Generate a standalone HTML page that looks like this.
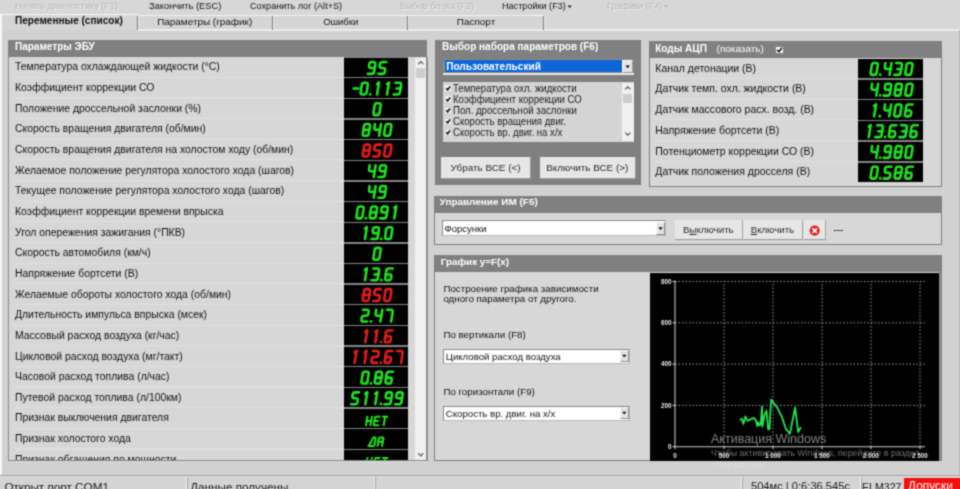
<!DOCTYPE html><html><head><meta charset="utf-8"><title>Diag</title><style>
html,body{margin:0;padding:0}body{width:960px;height:489px;overflow:hidden;position:relative;background:#d1d1d1;font-family:"Liberation Sans", sans-serif;}
div{box-sizing:border-box}
</style></head><body><svg width="0" height="0" style="position:absolute"><defs><filter id="blurf" x="-3%" y="-3%" width="106%" height="106%" color-interpolation-filters="sRGB"><feConvolveMatrix order="3" kernelMatrix="1 3.0 1 3.0 9.0 3.0 1 3.0 1" edgeMode="duplicate" preserveAlpha="true"/></filter></defs></svg><div id="w" style="position:absolute;left:0;top:0;width:960px;height:489px;filter:url(#blurf)">
<div style="position:absolute;left:-12.00px;top:-12.00px;width:984.00px;height:513.00px;background:#d1d1d1;"></div>
<div style="position:absolute;left:-12.00px;top:-12.00px;width:984.00px;height:42.00px;background:#d7d7d7;"></div>
<div style="position:absolute;top:2.10px;font-size:9.1px;line-height:1;white-space:nowrap;color:#aaa;left:15.00px;color:#b6b6b6;text-shadow:0.8px 0.8px 0 #f0f0f0;">Начать диагностику (F1)</div>
<div style="position:absolute;top:1.93px;font-size:9.3px;line-height:1;white-space:nowrap;color:#111111;left:149.00px;">Закончить (ESC)</div>
<div style="position:absolute;top:2.10px;font-size:9.1px;line-height:1;white-space:nowrap;color:#111111;left:250.00px;">Сохранить лог (Alt+S)</div>
<div style="position:absolute;top:2.10px;font-size:9.1px;line-height:1;white-space:nowrap;color:#aaa;left:400.00px;color:#b6b6b6;text-shadow:0.8px 0.8px 0 #f0f0f0;">Выбор блока (F2)</div>
<div style="position:absolute;top:2.10px;font-size:9.1px;line-height:1;white-space:nowrap;color:#111111;left:502.00px;">Настройки (F3)</div>
<div style="position:absolute;top:2.10px;font-size:9.1px;line-height:1;white-space:nowrap;color:#aaa;left:607.00px;color:#b6b6b6;text-shadow:0.8px 0.8px 0 #f0f0f0;">Графики (F4)</div>
<svg style="position:absolute;left:0;top:0" width="960" height="15"><path d="M567.6 5.6h4.2l-2.1 2.5z" fill="#222"/><path d="M664 5.6h4.2l-2.1 2.5z" fill="#b4b4b4"/></svg>
<div style="position:absolute;left:0.00px;top:15.00px;width:544.00px;height:15.00px;background:#d5d5d5;"></div>
<div style="position:absolute;left:-12.00px;top:14.10px;width:150.00px;height:1.30px;background:#f6f6f6;"></div>
<div style="position:absolute;left:138.00px;top:15.00px;width:406.00px;height:1.30px;background:#f2f2f2;"></div>
<div style="position:absolute;left:137.00px;top:29.40px;width:835.00px;height:1.40px;background:#ececec;"></div>
<div style="position:absolute;left:-12.00px;top:14.50px;width:13.50px;height:461.00px;background:#f6f6f6;"></div>
<div style="position:absolute;left:137.00px;top:16.00px;width:1.20px;height:14.00px;background:#7a7a7a;"></div>
<div style="position:absolute;left:138.00px;top:16.00px;width:1.00px;height:14.00px;background:#ececec;"></div>
<div style="position:absolute;left:272.00px;top:16.00px;width:1.20px;height:14.00px;background:#7a7a7a;"></div>
<div style="position:absolute;left:273.00px;top:16.00px;width:1.00px;height:14.00px;background:#ececec;"></div>
<div style="position:absolute;left:407.00px;top:16.00px;width:1.20px;height:14.00px;background:#7a7a7a;"></div>
<div style="position:absolute;left:408.00px;top:16.00px;width:1.00px;height:14.00px;background:#ececec;"></div>
<div style="position:absolute;left:543.00px;top:16.00px;width:1.20px;height:14.00px;background:#7a7a7a;"></div>
<div style="position:absolute;left:544.00px;top:16.00px;width:1.00px;height:14.00px;background:#ececec;"></div>
<div style="position:absolute;top:16.09px;font-size:10.05px;line-height:1;white-space:nowrap;color:#101010;font-weight:bold;left:15.00px;">Переменные (список)</div>
<div style="position:absolute;top:16.58px;font-size:9.95px;line-height:1;white-space:nowrap;color:#111111;left:4.70px;width:400px;text-align:center;">Параметры (график)</div>
<div style="position:absolute;top:17.00px;font-size:9.45px;line-height:1;white-space:nowrap;color:#111111;left:140.70px;width:400px;text-align:center;">Ошибки</div>
<div style="position:absolute;top:16.58px;font-size:9.95px;line-height:1;white-space:nowrap;color:#111111;left:276.00px;width:400px;text-align:center;">Паспорт</div>
<div style="position:absolute;left:959.00px;top:30.00px;width:13.00px;height:445.00px;background:#bcbcbc;"></div>
<div style="position:absolute;left:8.00px;top:40.00px;width:419.00px;height:17.20px;background:#808080;"></div>
<div style="position:absolute;top:42.03px;font-size:10.0px;line-height:1;white-space:nowrap;color:#fff;font-weight:bold;left:15.00px;">Параметры ЭБУ</div>
<div style="position:absolute;left:8.00px;top:57.00px;width:419.60px;height:403.90px;background:#d7d7d7;border-left:1px solid #8a8a8a;border-bottom:1px solid #848484;"></div>
<div style="position:absolute;left:8.00px;top:460.90px;width:419.00px;height:1.00px;background:#dadada;"></div>
<div style="position:absolute;left:426.00px;top:57.00px;width:1.60px;height:403.90px;background:#8e8e8e;"></div>
<div style="position:absolute;left:9px;top:57px;width:417px;height:402.9px;overflow:hidden">
<div style="position:absolute;left:335.00px;top:0.00px;width:64.00px;height:404.00px;background:#868686"></div>
<div style="position:absolute;left:6.00px;top:19.79px;width:329.00px;height:1.10px;background:#dfdfdf"></div>
<div style="position:absolute;left:6.00px;top:5.48px;font-size:10.42px;line-height:1;white-space:nowrap;color:#111111">Температура охлаждающей жидкости (°C)</div>
<div style="position:absolute;left:335.00px;top:0.75px;width:64.00px;height:19.29px;background:#000"></div>
<div style="position:absolute;left:6.00px;top:40.44px;width:329.00px;height:1.10px;background:#dfdfdf"></div>
<div style="position:absolute;left:6.00px;top:26.12px;font-size:10.42px;line-height:1;white-space:nowrap;color:#111111">Коэффициент коррекции СО</div>
<div style="position:absolute;left:335.00px;top:21.39px;width:64.00px;height:19.29px;background:#000"></div>
<div style="position:absolute;left:6.00px;top:61.08px;width:329.00px;height:1.10px;background:#dfdfdf"></div>
<div style="position:absolute;left:6.00px;top:46.77px;font-size:10.42px;line-height:1;white-space:nowrap;color:#111111">Положение дроссельной заслонки (%)</div>
<div style="position:absolute;left:335.00px;top:42.04px;width:64.00px;height:19.29px;background:#000"></div>
<div style="position:absolute;left:6.00px;top:81.73px;width:329.00px;height:1.10px;background:#dfdfdf"></div>
<div style="position:absolute;left:6.00px;top:67.41px;font-size:10.42px;line-height:1;white-space:nowrap;color:#111111">Скорость вращения двигателя (об/мин)</div>
<div style="position:absolute;left:335.00px;top:62.69px;width:64.00px;height:19.29px;background:#000"></div>
<div style="position:absolute;left:6.00px;top:102.38px;width:329.00px;height:1.10px;background:#dfdfdf"></div>
<div style="position:absolute;left:6.00px;top:88.06px;font-size:10.42px;line-height:1;white-space:nowrap;color:#111111">Скорость вращения двигателя на холостом ходу (об/мин)</div>
<div style="position:absolute;left:335.00px;top:83.33px;width:64.00px;height:19.29px;background:#000"></div>
<div style="position:absolute;left:6.00px;top:123.02px;width:329.00px;height:1.10px;background:#dfdfdf"></div>
<div style="position:absolute;left:6.00px;top:108.70px;font-size:10.42px;line-height:1;white-space:nowrap;color:#111111">Желаемое положение регулятора холостого хода (шагов)</div>
<div style="position:absolute;left:335.00px;top:103.97px;width:64.00px;height:19.29px;background:#000"></div>
<div style="position:absolute;left:6.00px;top:143.67px;width:329.00px;height:1.10px;background:#dfdfdf"></div>
<div style="position:absolute;left:6.00px;top:129.35px;font-size:10.42px;line-height:1;white-space:nowrap;color:#111111">Текущее положение регулятора холостого хода (шагов)</div>
<div style="position:absolute;left:335.00px;top:124.62px;width:64.00px;height:19.29px;background:#000"></div>
<div style="position:absolute;left:6.00px;top:164.31px;width:329.00px;height:1.10px;background:#dfdfdf"></div>
<div style="position:absolute;left:6.00px;top:149.99px;font-size:10.42px;line-height:1;white-space:nowrap;color:#111111">Коэффициент коррекции времени впрыска</div>
<div style="position:absolute;left:335.00px;top:145.26px;width:64.00px;height:19.29px;background:#000"></div>
<div style="position:absolute;left:6.00px;top:184.95px;width:329.00px;height:1.10px;background:#dfdfdf"></div>
<div style="position:absolute;left:6.00px;top:170.64px;font-size:10.42px;line-height:1;white-space:nowrap;color:#111111">Угол опережения зажигания (°ПКВ)</div>
<div style="position:absolute;left:335.00px;top:165.91px;width:64.00px;height:19.29px;background:#000"></div>
<div style="position:absolute;left:6.00px;top:205.60px;width:329.00px;height:1.10px;background:#dfdfdf"></div>
<div style="position:absolute;left:6.00px;top:191.28px;font-size:10.42px;line-height:1;white-space:nowrap;color:#111111">Скорость автомобиля (км/ч)</div>
<div style="position:absolute;left:335.00px;top:186.56px;width:64.00px;height:19.29px;background:#000"></div>
<div style="position:absolute;left:6.00px;top:226.25px;width:329.00px;height:1.10px;background:#dfdfdf"></div>
<div style="position:absolute;left:6.00px;top:211.93px;font-size:10.42px;line-height:1;white-space:nowrap;color:#111111">Напряжение бортсети (В)</div>
<div style="position:absolute;left:335.00px;top:207.20px;width:64.00px;height:19.29px;background:#000"></div>
<div style="position:absolute;left:6.00px;top:246.89px;width:329.00px;height:1.10px;background:#dfdfdf"></div>
<div style="position:absolute;left:6.00px;top:232.57px;font-size:10.42px;line-height:1;white-space:nowrap;color:#111111">Желаемые обороты холостого хода (об/мин)</div>
<div style="position:absolute;left:335.00px;top:227.84px;width:64.00px;height:19.29px;background:#000"></div>
<div style="position:absolute;left:6.00px;top:267.54px;width:329.00px;height:1.10px;background:#dfdfdf"></div>
<div style="position:absolute;left:6.00px;top:253.22px;font-size:10.42px;line-height:1;white-space:nowrap;color:#111111">Длительность импульса впрыска (мсек)</div>
<div style="position:absolute;left:335.00px;top:248.49px;width:64.00px;height:19.29px;background:#000"></div>
<div style="position:absolute;left:6.00px;top:288.18px;width:329.00px;height:1.10px;background:#dfdfdf"></div>
<div style="position:absolute;left:6.00px;top:273.86px;font-size:10.42px;line-height:1;white-space:nowrap;color:#111111">Массовый расход воздуха (кг/час)</div>
<div style="position:absolute;left:335.00px;top:269.13px;width:64.00px;height:19.29px;background:#000"></div>
<div style="position:absolute;left:6.00px;top:308.82px;width:329.00px;height:1.10px;background:#dfdfdf"></div>
<div style="position:absolute;left:6.00px;top:294.51px;font-size:10.42px;line-height:1;white-space:nowrap;color:#111111">Цикловой расход воздуха (мг/такт)</div>
<div style="position:absolute;left:335.00px;top:289.78px;width:64.00px;height:19.29px;background:#000"></div>
<div style="position:absolute;left:6.00px;top:329.47px;width:329.00px;height:1.10px;background:#dfdfdf"></div>
<div style="position:absolute;left:6.00px;top:315.15px;font-size:10.42px;line-height:1;white-space:nowrap;color:#111111">Часовой расход топлива (л/час)</div>
<div style="position:absolute;left:335.00px;top:310.43px;width:64.00px;height:19.29px;background:#000"></div>
<div style="position:absolute;left:6.00px;top:350.12px;width:329.00px;height:1.10px;background:#dfdfdf"></div>
<div style="position:absolute;left:6.00px;top:335.80px;font-size:10.42px;line-height:1;white-space:nowrap;color:#111111">Путевой расход топлива (л/100км)</div>
<div style="position:absolute;left:335.00px;top:331.07px;width:64.00px;height:19.29px;background:#000"></div>
<div style="position:absolute;left:6.00px;top:370.76px;width:329.00px;height:1.10px;background:#dfdfdf"></div>
<div style="position:absolute;left:6.00px;top:356.44px;font-size:10.42px;line-height:1;white-space:nowrap;color:#111111">Признак выключения двигателя</div>
<div style="position:absolute;left:335.00px;top:351.71px;width:64.00px;height:19.29px;background:#000"></div>
<div style="position:absolute;left:6.00px;top:391.41px;width:329.00px;height:1.10px;background:#dfdfdf"></div>
<div style="position:absolute;left:6.00px;top:377.09px;font-size:10.42px;line-height:1;white-space:nowrap;color:#111111">Признак холостого хода</div>
<div style="position:absolute;left:335.00px;top:372.36px;width:64.00px;height:19.29px;background:#000"></div>
<div style="position:absolute;left:6.00px;top:412.05px;width:329.00px;height:1.10px;background:#dfdfdf"></div>
<div style="position:absolute;left:6.00px;top:397.73px;font-size:10.42px;line-height:1;white-space:nowrap;color:#111111">Признак обгащения по мощности</div>
<div style="position:absolute;left:335.00px;top:393.00px;width:64.00px;height:19.29px;background:#000"></div>
</div>
<div style="position:absolute;left:415.00px;top:57.50px;width:11.00px;height:402.40px;background:#f0f0f0;"></div>
<div style="position:absolute;left:416.00px;top:68.00px;width:9.00px;height:10.00px;background:#cdcdcd;"></div>
<svg style="position:absolute;left:415px;top:57px" width="12" height="404"><path d="M3.2 7.2L5.8 4.6L8.4 7.2" stroke="#505050" stroke-width="1.2" fill="none"/><path d="M3.2 396.2L5.8 398.8L8.4 396.2" stroke="#505050" stroke-width="1.2" fill="none"/></svg>
<div style="position:absolute;left:435.00px;top:39.80px;width:206.00px;height:145.60px;background:#808080;"></div>
<div style="position:absolute;top:42.00px;font-size:10.04px;line-height:1;white-space:nowrap;color:#fff;font-weight:bold;left:442.00px;">Выбор набора параметров (F6)</div>
<div style="position:absolute;left:443.30px;top:58.70px;width:191.00px;height:14.50px;background:#8c8a88;"></div>
<div style="position:absolute;left:443.00px;top:73.20px;width:191.30px;height:1.50px;background:#ece8e6;"></div>
<div style="position:absolute;left:445.00px;top:60.00px;width:177.30px;height:12.40px;background:#0c66d8;"></div>
<div style="position:absolute;top:61.65px;font-size:10.1px;line-height:1;white-space:nowrap;color:#fff;font-weight:bold;left:446.20px;">Пользовательский</div>
<div style="position:absolute;left:622.30px;top:60.30px;width:10.80px;height:12.60px;background:#e6e6e6;border:1px solid #9a9a9a;border-top-color:#f8f8f8;border-left-color:#f8f8f8;"></div>
<svg style="position:absolute;left:622px;top:60px" width="12" height="13"><path d="M3.4 5.4h4.6l-2.3 2.8z" fill="#111"/></svg>
<div style="position:absolute;left:442.80px;top:82.00px;width:191.40px;height:59.60px;background:#d4d4d4;"></div>
<div style="position:absolute;left:622.00px;top:82.50px;width:11.60px;height:58.60px;background:#f0f0f0;"></div>
<div style="position:absolute;left:623.00px;top:94.00px;width:9.40px;height:9.40px;background:#cdcdcd;"></div>
<svg style="position:absolute;left:622px;top:82px" width="12" height="60"><path d="M3.2 7.4L5.8 4.8L8.4 7.4" stroke="#505050" stroke-width="1.2" fill="none"/><path d="M3.2 50.6L5.8 53.2L8.4 50.6" stroke="#505050" stroke-width="1.2" fill="none"/></svg>
<div style="position:absolute;top:82.84px;font-size:10.7px;line-height:1;white-space:nowrap;color:#1c1c1c;left:453.20px;transform:scaleX(0.9);transform-origin:0 50%;">Температура охл. жидкости</div>
<div style="position:absolute;left:445.10px;top:85.30px;width:5.60px;height:5.60px;background:#f4f4f4;"></div>
<svg style="position:absolute;left:445px;top:84.70px" width="7" height="7"><path d="M1.2 3.3L2.6 4.8L5.2 1.5" stroke="#080808" stroke-width="1.45" fill="none"/></svg>
<div style="position:absolute;top:93.94px;font-size:10.7px;line-height:1;white-space:nowrap;color:#1c1c1c;left:453.20px;transform:scaleX(0.9);transform-origin:0 50%;">Коэффициент коррекции СО</div>
<div style="position:absolute;left:445.10px;top:96.40px;width:5.60px;height:5.60px;background:#f4f4f4;"></div>
<svg style="position:absolute;left:445px;top:95.80px" width="7" height="7"><path d="M1.2 3.3L2.6 4.8L5.2 1.5" stroke="#080808" stroke-width="1.45" fill="none"/></svg>
<div style="position:absolute;top:105.04px;font-size:10.7px;line-height:1;white-space:nowrap;color:#1c1c1c;left:453.20px;transform:scaleX(0.9);transform-origin:0 50%;">Пол. дроссельной заслонки</div>
<div style="position:absolute;left:445.10px;top:107.50px;width:5.60px;height:5.60px;background:#f4f4f4;"></div>
<svg style="position:absolute;left:445px;top:106.90px" width="7" height="7"><path d="M1.2 3.3L2.6 4.8L5.2 1.5" stroke="#080808" stroke-width="1.45" fill="none"/></svg>
<div style="position:absolute;top:116.14px;font-size:10.7px;line-height:1;white-space:nowrap;color:#1c1c1c;left:453.20px;transform:scaleX(0.9);transform-origin:0 50%;">Скорость вращения двиг.</div>
<div style="position:absolute;left:445.10px;top:118.60px;width:5.60px;height:5.60px;background:#f4f4f4;"></div>
<svg style="position:absolute;left:445px;top:118.00px" width="7" height="7"><path d="M1.2 3.3L2.6 4.8L5.2 1.5" stroke="#080808" stroke-width="1.45" fill="none"/></svg>
<div style="position:absolute;top:127.24px;font-size:10.7px;line-height:1;white-space:nowrap;color:#1c1c1c;left:453.20px;transform:scaleX(0.9);transform-origin:0 50%;">Скорость вр. двиг. на х/х</div>
<div style="position:absolute;left:445.10px;top:129.70px;width:5.60px;height:5.60px;background:#f4f4f4;"></div>
<svg style="position:absolute;left:445px;top:129.10px" width="7" height="7"><path d="M1.2 3.3L2.6 4.8L5.2 1.5" stroke="#080808" stroke-width="1.45" fill="none"/></svg>
<div style="position:absolute;left:441.00px;top:156.60px;width:89.00px;height:21.00px;background:#e6e6e6;box-shadow:0.6px 0.8px 0 0.3px #9c9c9c;"></div>
<div style="position:absolute;top:162.62px;font-size:9.9px;line-height:1;white-space:nowrap;color:#2a2a2a;left:285.50px;width:400px;text-align:center;">Убрать ВСЕ (&lt;)</div>
<div style="position:absolute;left:540.00px;top:156.60px;width:94.50px;height:21.00px;background:#e6e6e6;box-shadow:0.6px 0.8px 0 0.3px #9c9c9c;"></div>
<div style="position:absolute;top:162.62px;font-size:9.9px;line-height:1;white-space:nowrap;color:#2a2a2a;left:387.25px;width:400px;text-align:center;">Включить ВСЕ (&gt;)</div>
<div style="position:absolute;left:649.00px;top:40.80px;width:292.60px;height:17.00px;background:#808080;"></div>
<div style="position:absolute;top:44.09px;font-size:10.05px;line-height:1;white-space:nowrap;color:#fff;font-weight:bold;left:655.20px;">Коды АЦП</div>
<div style="position:absolute;top:44.45px;font-size:9.98px;line-height:1;white-space:nowrap;color:#fff;left:716.60px;">(показать)</div>
<div style="position:absolute;left:775.60px;top:46.60px;width:7.80px;height:6.90px;background:#fafafa;"></div>
<svg style="position:absolute;left:775px;top:46px" width="9" height="8"><path d="M2 3.8L3.9 5.8L7 1.8" stroke="#000" stroke-width="1.4" fill="none"/></svg>
<div style="position:absolute;left:649.00px;top:57.80px;width:292.60px;height:129.00px;background:#d7d7d7;border:1px solid #7e7e7e;border-top:none;"></div>
<div style="position:absolute;left:858.30px;top:58.60px;width:64.40px;height:123.00px;background:#868686;"></div>
<div style="position:absolute;left:655.30px;top:77.85px;width:203.00px;height:1.10px;background:#dfdfdf;"></div>
<div style="position:absolute;top:63.53px;font-size:10.48px;line-height:1;white-space:nowrap;color:#111111;left:655.30px;">Канал детонации (В)</div>
<div style="position:absolute;left:858.30px;top:58.75px;width:64.40px;height:19.35px;background:#000;"></div>
<div style="position:absolute;left:655.30px;top:98.60px;width:203.00px;height:1.10px;background:#dfdfdf;"></div>
<div style="position:absolute;top:84.28px;font-size:10.48px;line-height:1;white-space:nowrap;color:#111111;left:655.30px;">Датчик темп. охл. жидкости (В)</div>
<div style="position:absolute;left:858.30px;top:79.50px;width:64.40px;height:19.35px;background:#000;"></div>
<div style="position:absolute;left:655.30px;top:119.35px;width:203.00px;height:1.10px;background:#dfdfdf;"></div>
<div style="position:absolute;top:105.03px;font-size:10.48px;line-height:1;white-space:nowrap;color:#111111;left:655.30px;">Датчик массового расх. возд. (В)</div>
<div style="position:absolute;left:858.30px;top:100.25px;width:64.40px;height:19.35px;background:#000;"></div>
<div style="position:absolute;left:655.30px;top:140.10px;width:203.00px;height:1.10px;background:#dfdfdf;"></div>
<div style="position:absolute;top:125.78px;font-size:10.48px;line-height:1;white-space:nowrap;color:#111111;left:655.30px;">Напряжение бортсети (В)</div>
<div style="position:absolute;left:858.30px;top:121.00px;width:64.40px;height:19.35px;background:#000;"></div>
<div style="position:absolute;left:655.30px;top:160.85px;width:203.00px;height:1.10px;background:#dfdfdf;"></div>
<div style="position:absolute;top:146.53px;font-size:10.48px;line-height:1;white-space:nowrap;color:#111111;left:655.30px;">Потенциометр коррекции СО (В)</div>
<div style="position:absolute;left:858.30px;top:141.75px;width:64.40px;height:19.35px;background:#000;"></div>
<div style="position:absolute;top:167.28px;font-size:10.48px;line-height:1;white-space:nowrap;color:#111111;left:655.30px;">Датчик положения дросселя (В)</div>
<div style="position:absolute;left:858.30px;top:162.50px;width:64.40px;height:19.35px;background:#000;"></div>
<div style="position:absolute;left:434.00px;top:196.00px;width:507.60px;height:17.00px;background:#808080;"></div>
<div style="position:absolute;top:196.56px;font-size:9.97px;line-height:1;white-space:nowrap;color:#fff;font-weight:bold;left:439.60px;">Управление ИМ (F5)</div>
<div style="position:absolute;left:434.00px;top:213.00px;width:507.60px;height:31.80px;background:#d7d7d7;border:1px solid #7e7e7e;border-top:none;"></div>
<div style="position:absolute;left:441.80px;top:220.30px;width:224.50px;height:16.00px;background:#fff;border:1px solid #b8b8b8;border-top-color:#8a8a8a;border-left-color:#8a8a8a;"></div>
<div style="position:absolute;top:223.72px;font-size:9.55px;line-height:1;white-space:nowrap;color:#111;left:444.40px;">Форсунки</div>
<div style="position:absolute;left:656.30px;top:222.00px;width:9.00px;height:12.60px;background:#e4e4e4;border:1px solid #8c8c8c;border-top-color:#f6f6f6;border-left-color:#f6f6f6;"></div>
<svg style="position:absolute;left:656px;top:222px" width="10" height="13"><path d="M2.3 5.2h4.6l-2.3 2.8z" fill="#111"/></svg>
<div style="position:absolute;left:675.00px;top:219.50px;width:66.60px;height:19.40px;background:#e6e6e6;box-shadow:0.6px 0.8px 0 0.3px #9c9c9c;"></div>
<div style="position:absolute;top:224.85px;font-size:9.75px;line-height:1;white-space:nowrap;color:#2a2a2a;left:508.30px;width:400px;text-align:center;">В<u>ы</u>ключить</div>
<div style="position:absolute;left:742.60px;top:219.50px;width:59.60px;height:19.40px;background:#e6e6e6;box-shadow:0.6px 0.8px 0 0.3px #9c9c9c;"></div>
<div style="position:absolute;top:224.89px;font-size:9.7px;line-height:1;white-space:nowrap;color:#2a2a2a;left:572.40px;width:400px;text-align:center;"><u>В</u>ключить</div>
<div style="position:absolute;left:803.60px;top:219.50px;width:21.40px;height:19.40px;background:#e6e6e6;box-shadow:0.6px 0.8px 0 0.3px #9c9c9c;"></div>
<div style="position:absolute;top:224.72px;font-size:9.9px;line-height:1;white-space:nowrap;color:#2a2a2a;left:614.30px;width:400px;text-align:center;"></div>
<svg style="position:absolute;left:808px;top:223.8px" width="14" height="14"><circle cx="6.7" cy="6.6" r="5.1" fill="#e01b24"/><path d="M4.5 4.4L8.9 8.8M8.9 4.4L4.5 8.8" stroke="#fff" stroke-width="1.7"/></svg>
<div style="position:absolute;top:225.03px;font-size:10px;line-height:1;white-space:nowrap;color:#111;left:833.40px;">---</div>
<div style="position:absolute;left:434.00px;top:254.60px;width:507.60px;height:17.60px;background:#808080;"></div>
<div style="position:absolute;top:257.36px;font-size:9.85px;line-height:1;white-space:nowrap;color:#fff;font-weight:bold;left:440.80px;">График y=F(x)</div>
<div style="position:absolute;left:434.00px;top:272.00px;width:507.60px;height:188.80px;background:#d7d7d7;border:1px solid #7e7e7e;border-top:none;"></div>
<div style="position:absolute;top:283.55px;font-size:9.75px;line-height:1;white-space:nowrap;color:#111111;left:443.40px;">Построение графика зависимости</div>
<div style="position:absolute;top:294.05px;font-size:9.75px;line-height:1;white-space:nowrap;color:#111111;left:443.40px;">одного параметра от другого.</div>
<div style="position:absolute;top:330.05px;font-size:9.75px;line-height:1;white-space:nowrap;color:#111111;left:443.40px;">По вертикали (F8)</div>
<div style="position:absolute;top:387.35px;font-size:9.75px;line-height:1;white-space:nowrap;color:#111111;left:443.40px;">По горизонтали (F9)</div>
<div style="position:absolute;left:442.60px;top:348.80px;width:187.00px;height:15.20px;background:#fff;border:1px solid #b8b8b8;border-top-color:#8a8a8a;border-left-color:#8a8a8a;"></div>
<div style="position:absolute;top:351.54px;font-size:9.64px;line-height:1;white-space:nowrap;color:#111;left:445.80px;">Цикловой расход воздуха</div>
<div style="position:absolute;left:620.00px;top:350.40px;width:8.60px;height:12.00px;background:#e4e4e4;border:1px solid #8c8c8c;border-top-color:#f6f6f6;border-left-color:#f6f6f6;"></div>
<svg style="position:absolute;left:620.0px;top:350.4px" width="9" height="12"><path d="M2.1 4.8h4.4l-2.2 2.7z" fill="#111"/></svg>
<div style="position:absolute;left:442.60px;top:405.80px;width:187.00px;height:15.20px;background:#fff;border:1px solid #b8b8b8;border-top-color:#8a8a8a;border-left-color:#8a8a8a;"></div>
<div style="position:absolute;top:408.54px;font-size:9.64px;line-height:1;white-space:nowrap;color:#111;left:445.80px;">Скорость вр. двиг. на х/х</div>
<div style="position:absolute;left:620.00px;top:407.40px;width:8.60px;height:12.00px;background:#e4e4e4;border:1px solid #8c8c8c;border-top-color:#f6f6f6;border-left-color:#f6f6f6;"></div>
<svg style="position:absolute;left:620.0px;top:407.4px" width="9" height="12"><path d="M2.1 4.8h4.4l-2.2 2.7z" fill="#111"/></svg>
<div style="position:absolute;left:650.00px;top:272.80px;width:289.00px;height:188.00px;background:#000;"></div>
<div style="position:absolute;left:939.00px;top:272.20px;width:2.60px;height:188.60px;background:#8a8a8a;"></div>
<svg style="position:absolute;left:0;top:0" width="960" height="489"><g stroke="#a2a2a2" stroke-width="0.9" stroke-dasharray="1.6 1.9" fill="none"><path d="M675.0 405.40H924.90"/><path d="M675.0 364.10H924.90"/><path d="M675.0 322.80H924.90"/><path d="M675.0 281.50H924.90"/><path d="M724.00 446.7V281.50"/><path d="M773.00 446.7V281.50"/><path d="M822.00 446.7V281.50"/><path d="M871.00 446.7V281.50"/><path d="M920.00 446.7V281.50"/></g><path d="M675.0 280.50V446.7H924.90" stroke="#cdcdcd" stroke-width="1.1" fill="none"/><path d="M672.5 446.70H675.0" stroke="#d8d8d8" stroke-width="1"/><text x="671.5" y="448.90" font-size="6.3" font-weight="bold" fill="#e8e8e8" text-anchor="end" font-family='"Liberation Sans", sans-serif'>0</text><path d="M672.5 405.40H675.0" stroke="#d8d8d8" stroke-width="1"/><text x="671.5" y="407.60" font-size="6.3" font-weight="bold" fill="#e8e8e8" text-anchor="end" font-family='"Liberation Sans", sans-serif'>200</text><path d="M672.5 364.10H675.0" stroke="#d8d8d8" stroke-width="1"/><text x="671.5" y="366.30" font-size="6.3" font-weight="bold" fill="#e8e8e8" text-anchor="end" font-family='"Liberation Sans", sans-serif'>400</text><path d="M672.5 322.80H675.0" stroke="#d8d8d8" stroke-width="1"/><text x="671.5" y="325.00" font-size="6.3" font-weight="bold" fill="#e8e8e8" text-anchor="end" font-family='"Liberation Sans", sans-serif'>600</text><path d="M672.5 281.50H675.0" stroke="#d8d8d8" stroke-width="1"/><text x="671.5" y="283.70" font-size="6.3" font-weight="bold" fill="#e8e8e8" text-anchor="end" font-family='"Liberation Sans", sans-serif'>800</text><path d="M675.00 446.7v2.5" stroke="#d8d8d8" stroke-width="1"/><text x="675.00" y="457.70" font-size="6.3" font-weight="bold" fill="#e8e8e8" text-anchor="middle" font-family='"Liberation Sans", sans-serif'>0</text><path d="M724.00 446.7v2.5" stroke="#d8d8d8" stroke-width="1"/><text x="724.00" y="457.70" font-size="6.3" font-weight="bold" fill="#e8e8e8" text-anchor="middle" font-family='"Liberation Sans", sans-serif'>500</text><path d="M773.00 446.7v2.5" stroke="#d8d8d8" stroke-width="1"/><text x="773.00" y="457.70" font-size="6.3" font-weight="bold" fill="#e8e8e8" text-anchor="middle" font-family='"Liberation Sans", sans-serif'>1 000</text><path d="M822.00 446.7v2.5" stroke="#d8d8d8" stroke-width="1"/><text x="822.00" y="457.70" font-size="6.3" font-weight="bold" fill="#e8e8e8" text-anchor="middle" font-family='"Liberation Sans", sans-serif'>1 500</text><path d="M871.00 446.7v2.5" stroke="#d8d8d8" stroke-width="1"/><text x="871.00" y="457.70" font-size="6.3" font-weight="bold" fill="#e8e8e8" text-anchor="middle" font-family='"Liberation Sans", sans-serif'>2 000</text><path d="M920.00 446.7v2.5" stroke="#d8d8d8" stroke-width="1"/><text x="920.00" y="457.70" font-size="6.3" font-weight="bold" fill="#e8e8e8" text-anchor="middle" font-family='"Liberation Sans", sans-serif'>2 500</text><path d="M739.9 419.9L742.0 418.9L743.4 424.0L745.4 416.4L747.5 420.9L753.6 417.9L755.7 419.9L757.3 426.0L758.3 422.0L759.3 425.4L760.8 424.0L762.0 406.6L762.4 426.6L764.5 414.8L766.5 410.7L768.1 429.1L769.6 429.1L770.2 414.8L771.2 399.4L777.8 408.6L781.8 416.8L785.9 429.1L790.0 433.6L795.1 407.6L798.2 432.2L800.9 427.1" stroke="#28e250" stroke-width="1.8" fill="none" stroke-linejoin="round"/></svg>
<div style="position:absolute;left:-12.00px;top:474.80px;width:984.00px;height:1.40px;background:#a2a2a2;"></div>
<div style="position:absolute;left:-12.00px;top:476.00px;width:984.00px;height:25.00px;background:#d4d4d4;"></div>
<div style="position:absolute;left:-12.00px;top:476.20px;width:984.00px;height:1.00px;background:#dedede;"></div>
<div style="position:absolute;left:185.60px;top:477.00px;width:1.00px;height:24.00px;background:#f6f6f6;"></div>
<div style="position:absolute;left:186.60px;top:477.00px;width:1.00px;height:24.00px;background:#a0a0a0;"></div>
<div style="position:absolute;left:373.60px;top:477.00px;width:1.00px;height:24.00px;background:#f6f6f6;"></div>
<div style="position:absolute;left:374.60px;top:477.00px;width:1.00px;height:24.00px;background:#a0a0a0;"></div>
<div style="position:absolute;left:740.60px;top:477.00px;width:1.00px;height:24.00px;background:#f6f6f6;"></div>
<div style="position:absolute;left:741.60px;top:477.00px;width:1.00px;height:24.00px;background:#a0a0a0;"></div>
<div style="position:absolute;left:859.60px;top:477.00px;width:1.00px;height:24.00px;background:#f6f6f6;"></div>
<div style="position:absolute;left:860.60px;top:477.00px;width:1.00px;height:24.00px;background:#a0a0a0;"></div>
<div style="position:absolute;top:480.80px;font-size:11.7px;line-height:1;white-space:nowrap;color:#1a1a1a;left:4.40px;">Открыт порт COM1</div>
<div style="position:absolute;top:480.80px;font-size:11.7px;line-height:1;white-space:nowrap;color:#1a1a1a;left:190.20px;">Данные получены</div>
<div style="position:absolute;top:481.28px;font-size:11.13px;line-height:1;white-space:nowrap;color:#1a1a1a;left:751.00px;">504мс | 0:6:36.545с</div>
<div style="position:absolute;top:481.73px;font-size:10.6px;line-height:1;white-space:nowrap;color:#1a1a1a;left:862.00px;">ELM327</div>
<div style="position:absolute;left:904.00px;top:478.00px;width:68.00px;height:23.00px;background:#f80c0c;"></div>
<div style="position:absolute;top:480.63px;font-size:11.9px;line-height:1;white-space:nowrap;color:#fff;left:908.00px;">Допуски</div>
<div style="position:absolute;top:432.62px;font-size:12.5px;line-height:1;white-space:nowrap;color:rgba(225,225,225,0.56);left:711.00px;">Активация Windows</div>
<div style="position:absolute;top:448.73px;font-size:8.83px;line-height:1;white-space:nowrap;color:rgba(215,215,215,0.5);left:711.00px;">Чтобы активировать Windows, перейдите в раздел</div>
<div style="position:absolute;top:460.53px;font-size:8.83px;line-height:1;white-space:nowrap;color:rgba(236,236,236,0.45);left:713.00px;">"Параметры".</div>
<svg style="position:absolute;left:0;top:0" width="960" height="489"><defs><clipPath id="cl"><rect x="344" y="440" width="64" height="19.8"/></clipPath></defs><g stroke="#1fe61f" stroke-width="2.55" fill="none" stroke-linecap="round" stroke-linejoin="round"><path d="M374.72 67.95L370.82 67.95Q368.72 67.95 369.05 65.88L369.33 64.12Q369.66 62.05 371.76 62.05L373.56 62.05Q375.66 62.05 375.33 64.12L374.11 71.78Q373.77 73.85 371.67 73.85L367.77 73.85"/><path d="M386.36 62.05L382.46 62.05Q380.36 62.05 380.03 64.12L379.75 65.88Q379.42 67.95 381.52 67.95L383.32 67.95Q385.42 67.95 385.09 70.02L384.81 71.78Q384.47 73.85 382.37 73.85L378.47 73.85"/></g><g stroke="#1fe61f" stroke-width="2.55" fill="none" stroke-linecap="round" stroke-linejoin="round"><path d="M353.62 88.59L358.30 88.59"/><path d="M364.26 82.69L366.06 82.69Q368.16 82.69 367.83 84.77L366.61 92.42Q366.27 94.49 364.17 94.49L362.38 94.49Q360.27 94.49 360.61 92.42L361.83 84.77Q362.16 82.69 364.26 82.69Z"/><circle cx="370.10" cy="94.34" r="1.40" fill="#1fe61f" stroke="none"/><path d="M378.96 82.69L377.07 94.49"/><path d="M377.06 83.99L378.96 82.69"/><path d="M388.96 82.69L387.07 94.49"/><path d="M387.06 83.99L388.96 82.69"/><path d="M395.46 82.69L399.36 82.69Q401.46 82.69 401.13 84.77L399.91 92.42Q399.57 94.49 397.47 94.49L393.57 94.49"/><path d="M396.62 88.59L400.52 88.59"/></g><g stroke="#1fe61f" stroke-width="2.55" fill="none" stroke-linecap="round" stroke-linejoin="round"><path d="M377.11 103.34L378.91 103.34Q381.01 103.34 380.68 105.41L379.46 113.07Q379.12 115.14 377.02 115.14L375.22 115.14Q373.12 115.14 373.46 113.07L374.68 105.41Q375.01 103.34 377.11 103.34Z"/></g><g stroke="#1fe61f" stroke-width="2.55" fill="none" stroke-linecap="round" stroke-linejoin="round"><path d="M366.41 123.98L368.21 123.98Q370.31 123.98 369.98 126.06L368.76 133.71Q368.42 135.78 366.32 135.78L364.52 135.78Q362.42 135.78 362.76 133.71L363.98 126.06Q364.31 123.98 366.41 123.98Z"/><path d="M363.37 129.88L369.37 129.88"/><path d="M375.01 123.98L374.40 127.81Q374.07 129.88 376.17 129.88L380.07 129.88"/><path d="M381.01 123.98L379.12 135.78"/><path d="M387.81 123.98L389.61 123.98Q391.71 123.98 391.38 126.06L390.16 133.71Q389.82 135.78 387.72 135.78L385.92 135.78Q383.82 135.78 384.16 133.71L385.38 126.06Q385.71 123.98 387.81 123.98Z"/></g><g stroke="#e81c1c" stroke-width="2.55" fill="none" stroke-linecap="round" stroke-linejoin="round"><path d="M366.41 144.63L368.21 144.63Q370.31 144.63 369.98 146.70L368.76 154.36Q368.42 156.43 366.32 156.43L364.52 156.43Q362.42 156.43 362.76 154.36L363.98 146.70Q364.31 144.63 366.41 144.63Z"/><path d="M363.37 150.53L369.37 150.53"/><path d="M381.01 144.63L377.11 144.63Q375.01 144.63 374.68 146.70L374.40 148.46Q374.07 150.53 376.17 150.53L377.97 150.53Q380.07 150.53 379.74 152.60L379.46 154.36Q379.12 156.43 377.02 156.43L373.12 156.43"/><path d="M387.81 144.63L389.61 144.63Q391.71 144.63 391.38 146.70L390.16 154.36Q389.82 156.43 387.72 156.43L385.92 156.43Q383.82 156.43 384.16 154.36L385.38 146.70Q385.71 144.63 387.81 144.63Z"/></g><g stroke="#1fe61f" stroke-width="2.55" fill="none" stroke-linecap="round" stroke-linejoin="round"><path d="M369.66 165.27L369.05 169.10Q368.72 171.17 370.82 171.17L374.72 171.17"/><path d="M375.66 165.27L373.77 177.07"/><path d="M385.42 171.17L381.52 171.17Q379.42 171.17 379.75 169.10L380.03 167.35Q380.36 165.27 382.46 165.27L384.26 165.27Q386.36 165.27 386.03 167.35L384.81 175.00Q384.47 177.07 382.37 177.07L378.47 177.07"/></g><g stroke="#1fe61f" stroke-width="2.55" fill="none" stroke-linecap="round" stroke-linejoin="round"><path d="M369.66 185.92L369.05 189.75Q368.72 191.82 370.82 191.82L374.72 191.82"/><path d="M375.66 185.92L373.77 197.72"/><path d="M385.42 191.82L381.52 191.82Q379.42 191.82 379.75 189.75L380.03 187.99Q380.36 185.92 382.46 185.92L384.26 185.92Q386.36 185.92 386.03 187.99L384.81 195.65Q384.47 197.72 382.37 197.72L378.47 197.72"/></g><g stroke="#1fe61f" stroke-width="2.55" fill="none" stroke-linecap="round" stroke-linejoin="round"><path d="M360.11 206.56L361.91 206.56Q364.01 206.56 363.68 208.64L362.46 216.29Q362.12 218.37 360.02 218.37L358.22 218.37Q356.12 218.37 356.46 216.29L357.68 208.64Q358.01 206.56 360.11 206.56Z"/><circle cx="365.95" cy="218.22" r="1.40" fill="#1fe61f" stroke="none"/><path d="M373.41 206.56L375.21 206.56Q377.31 206.56 376.98 208.64L375.76 216.29Q375.42 218.37 373.32 218.37L371.52 218.37Q369.42 218.37 369.76 216.29L370.98 208.64Q371.31 206.56 373.41 206.56Z"/><path d="M370.37 212.47L376.37 212.47"/><path d="M387.07 212.47L383.17 212.47Q381.07 212.47 381.40 210.39L381.68 208.64Q382.01 206.56 384.11 206.56L385.91 206.56Q388.01 206.56 387.68 208.64L386.46 216.29Q386.12 218.37 384.02 218.37L380.12 218.37"/><path d="M396.21 206.56L394.32 218.37"/><path d="M394.30 207.87L396.21 206.56"/></g><g stroke="#1fe61f" stroke-width="2.55" fill="none" stroke-linecap="round" stroke-linejoin="round"><path d="M366.86 227.21L364.97 239.01"/><path d="M364.95 228.51L366.86 227.21"/><path d="M378.42 233.11L374.52 233.11Q372.42 233.11 372.75 231.04L373.03 229.28Q373.36 227.21 375.46 227.21L377.26 227.21Q379.36 227.21 379.03 229.28L377.81 236.94Q377.47 239.01 375.37 239.01L371.47 239.01"/><circle cx="381.30" cy="238.86" r="1.40" fill="#1fe61f" stroke="none"/><path d="M388.76 227.21L390.56 227.21Q392.66 227.21 392.33 229.28L391.11 236.94Q390.77 239.01 388.67 239.01L386.88 239.01Q384.77 239.01 385.11 236.94L386.33 229.28Q386.66 227.21 388.76 227.21Z"/></g><g stroke="#1fe61f" stroke-width="2.55" fill="none" stroke-linecap="round" stroke-linejoin="round"><path d="M377.11 247.86L378.91 247.86Q381.01 247.86 380.68 249.93L379.46 257.58Q379.12 259.66 377.02 259.66L375.22 259.66Q373.12 259.66 373.46 257.58L374.68 249.93Q375.01 247.86 377.11 247.86Z"/></g><g stroke="#1fe61f" stroke-width="2.55" fill="none" stroke-linecap="round" stroke-linejoin="round"><path d="M366.86 268.50L364.97 280.30"/><path d="M364.95 269.80L366.86 268.50"/><path d="M373.36 268.50L377.26 268.50Q379.36 268.50 379.03 270.57L377.81 278.23Q377.47 280.30 375.37 280.30L371.47 280.30"/><path d="M374.52 274.40L378.42 274.40"/><circle cx="381.30" cy="280.15" r="1.40" fill="#1fe61f" stroke="none"/><path d="M392.66 268.50L388.76 268.50Q386.66 268.50 386.33 270.57L385.11 278.23Q384.77 280.30 386.88 280.30L388.67 280.30Q390.77 280.30 391.11 278.23L391.39 276.47Q391.72 274.40 389.62 274.40L385.72 274.40"/></g><g stroke="#e81c1c" stroke-width="2.55" fill="none" stroke-linecap="round" stroke-linejoin="round"><path d="M366.41 289.14L368.21 289.14Q370.31 289.14 369.98 291.22L368.76 298.87Q368.42 300.94 366.32 300.94L364.52 300.94Q362.42 300.94 362.76 298.87L363.98 291.22Q364.31 289.14 366.41 289.14Z"/><path d="M363.37 295.04L369.37 295.04"/><path d="M381.01 289.14L377.11 289.14Q375.01 289.14 374.68 291.22L374.40 292.97Q374.07 295.04 376.17 295.04L377.97 295.04Q380.07 295.04 379.74 297.12L379.46 298.87Q379.12 300.94 377.02 300.94L373.12 300.94"/><path d="M387.81 289.14L389.61 289.14Q391.71 289.14 391.38 291.22L390.16 298.87Q389.82 300.94 387.72 300.94L385.92 300.94Q383.82 300.94 384.16 298.87L385.38 291.22Q385.71 289.14 387.81 289.14Z"/></g><g stroke="#1fe61f" stroke-width="2.55" fill="none" stroke-linecap="round" stroke-linejoin="round"><path d="M363.01 309.79L366.91 309.79Q369.01 309.79 368.68 311.86L368.40 313.62Q368.07 315.69 365.97 315.69L364.17 315.69Q362.07 315.69 361.74 317.76L361.46 319.52Q361.12 321.59 363.22 321.59L367.12 321.59"/><circle cx="370.95" cy="321.44" r="1.40" fill="#1fe61f" stroke="none"/><path d="M376.31 309.79L375.70 313.62Q375.37 315.69 377.47 315.69L381.37 315.69"/><path d="M382.31 309.79L380.42 321.59"/><path d="M387.01 309.79L390.91 309.79Q393.01 309.79 392.68 311.86L391.12 321.59"/></g><g stroke="#e81c1c" stroke-width="2.55" fill="none" stroke-linecap="round" stroke-linejoin="round"><path d="M367.21 330.44L365.32 342.24"/><path d="M365.31 331.74L367.21 330.44"/><path d="M377.21 330.44L375.32 342.24"/><path d="M375.31 331.74L377.21 330.44"/><circle cx="380.95" cy="342.09" r="1.40" fill="#e81c1c" stroke="none"/><path d="M392.31 330.44L388.41 330.44Q386.31 330.44 385.98 332.51L384.76 340.16Q384.43 342.24 386.53 342.24L388.32 342.24Q390.43 342.24 390.76 340.16L391.04 338.41Q391.37 336.33 389.27 336.33L385.37 336.33"/></g><g stroke="#e81c1c" stroke-width="2.55" fill="none" stroke-linecap="round" stroke-linejoin="round"><path d="M356.51 351.08L354.62 362.88"/><path d="M354.60 352.38L356.51 351.08"/><path d="M366.51 351.08L364.62 362.88"/><path d="M364.60 352.38L366.51 351.08"/><path d="M373.01 351.08L376.91 351.08Q379.01 351.08 378.68 353.15L378.40 354.91Q378.07 356.98 375.97 356.98L374.17 356.98Q372.07 356.98 371.74 359.05L371.46 360.81Q371.12 362.88 373.22 362.88L377.12 362.88"/><circle cx="380.95" cy="362.73" r="1.40" fill="#e81c1c" stroke="none"/><path d="M392.31 351.08L388.41 351.08Q386.31 351.08 385.98 353.15L384.76 360.81Q384.42 362.88 386.52 362.88L388.32 362.88Q390.42 362.88 390.76 360.81L391.04 359.05Q391.37 356.98 389.27 356.98L385.37 356.98"/><path d="M397.01 351.08L400.91 351.08Q403.01 351.08 402.68 353.15L401.12 362.88"/></g><g stroke="#1fe61f" stroke-width="2.55" fill="none" stroke-linecap="round" stroke-linejoin="round"><path d="M365.11 371.73L366.91 371.73Q369.01 371.73 368.68 373.80L367.46 381.45Q367.12 383.53 365.02 383.53L363.22 383.53Q361.12 383.53 361.46 381.45L362.68 373.80Q363.01 371.73 365.11 371.73Z"/><circle cx="370.95" cy="383.38" r="1.40" fill="#1fe61f" stroke="none"/><path d="M378.41 371.73L380.21 371.73Q382.31 371.73 381.98 373.80L380.76 381.45Q380.42 383.53 378.32 383.53L376.52 383.53Q374.42 383.53 374.76 381.45L375.98 373.80Q376.31 371.73 378.41 371.73Z"/><path d="M375.37 377.62L381.37 377.62"/><path d="M393.01 371.73L389.11 371.73Q387.01 371.73 386.68 373.80L385.46 381.45Q385.12 383.53 387.22 383.53L389.02 383.53Q391.12 383.53 391.46 381.45L391.74 379.70Q392.07 377.62 389.97 377.62L386.07 377.62"/></g><g stroke="#1fe61f" stroke-width="2.55" fill="none" stroke-linecap="round" stroke-linejoin="round"><path d="M359.01 392.37L355.11 392.37Q353.01 392.37 352.68 394.44L352.40 396.20Q352.07 398.27 354.17 398.27L355.97 398.27Q358.07 398.27 357.74 400.34L357.46 402.10Q357.12 404.17 355.02 404.17L351.12 404.17"/><path d="M367.21 392.37L365.32 404.17"/><path d="M365.30 393.67L367.21 392.37"/><path d="M377.21 392.37L375.32 404.17"/><path d="M375.30 393.67L377.21 392.37"/><circle cx="380.95" cy="404.02" r="1.40" fill="#1fe61f" stroke="none"/><path d="M391.37 398.27L387.47 398.27Q385.37 398.27 385.70 396.20L385.98 394.44Q386.31 392.37 388.41 392.37L390.21 392.37Q392.31 392.37 391.98 394.44L390.76 402.10Q390.42 404.17 388.32 404.17L384.42 404.17"/><path d="M402.07 398.27L398.17 398.27Q396.07 398.27 396.40 396.20L396.68 394.44Q397.01 392.37 399.11 392.37L400.91 392.37Q403.01 392.37 402.68 394.44L401.46 402.10Q401.12 404.17 399.02 404.17L395.12 404.17"/></g><g stroke="#1fe61f" stroke-width="2.0" fill="none" stroke-linecap="round" stroke-linejoin="round"><path d="M367.42 416.76L365.98 425.26"/><path d="M371.92 416.76L370.48 425.26"/><path d="M366.70 421.01L371.20 421.01"/><path d="M379.67 416.76L375.97 416.76Q375.17 416.76 375.04 417.55L373.86 424.48Q373.73 425.26 374.53 425.26L378.23 425.26"/><path d="M374.45 421.01L378.05 421.01"/><path d="M382.92 416.76L387.42 416.76"/><path d="M385.17 416.76L383.73 425.26"/></g><g stroke="#1fe61f" stroke-width="2.0" fill="none" stroke-linecap="round" stroke-linejoin="round"><path d="M368.73 445.91L372.94 438.11Q373.32 437.41 374.12 437.41L375.00 437.41Q375.80 437.41 375.66 438.20L374.48 445.12Q374.35 445.91 373.55 445.91L368.50 445.91"/><path d="M377.60 445.91L378.91 438.20Q379.05 437.41 379.85 437.41L382.75 437.41Q383.55 437.41 383.41 438.20L382.10 445.91"/><path d="M378.32 441.66L382.82 441.66"/></g><g clip-path="url(#cl)"><g stroke="#1fe61f" stroke-width="2.0" fill="none" stroke-linecap="round" stroke-linejoin="round"><path d="M367.42 458.06L365.98 466.56"/><path d="M371.92 458.06L370.48 466.56"/><path d="M366.70 462.31L371.20 462.31"/><path d="M379.67 458.06L375.97 458.06Q375.17 458.06 375.04 458.84L373.86 465.77Q373.73 466.56 374.53 466.56L378.23 466.56"/><path d="M374.45 462.31L378.05 462.31"/><path d="M382.92 458.06L387.42 458.06"/><path d="M385.17 458.06L383.73 466.56"/></g></g><g stroke="#1fe61f" stroke-width="2.55" fill="none" stroke-linecap="round" stroke-linejoin="round"><path d="M874.26 63.05L876.06 63.05Q878.16 63.05 877.83 65.12L876.61 72.78Q876.27 74.85 874.17 74.85L872.38 74.85Q870.27 74.85 870.61 72.78L871.83 65.12Q872.16 63.05 874.26 63.05Z"/><circle cx="880.10" cy="74.70" r="1.40" fill="#1fe61f" stroke="none"/><path d="M885.46 63.05L884.85 66.88Q884.52 68.95 886.62 68.95L890.52 68.95"/><path d="M891.46 63.05L889.58 74.85"/><path d="M896.16 63.05L900.06 63.05Q902.16 63.05 901.83 65.12L900.61 72.78Q900.28 74.85 898.18 74.85L894.28 74.85"/><path d="M897.32 68.95L901.22 68.95"/><path d="M908.96 63.05L910.76 63.05Q912.86 63.05 912.53 65.12L911.31 72.78Q910.98 74.85 908.88 74.85L907.08 74.85Q904.98 74.85 905.31 72.78L906.53 65.12Q906.86 63.05 908.96 63.05Z"/></g><g stroke="#1fe61f" stroke-width="2.55" fill="none" stroke-linecap="round" stroke-linejoin="round"><path d="M872.16 83.80L871.55 87.63Q871.22 89.70 873.32 89.70L877.22 89.70"/><path d="M878.16 83.80L876.27 95.60"/><circle cx="880.10" cy="95.45" r="1.40" fill="#1fe61f" stroke="none"/><path d="M890.52 89.70L886.62 89.70Q884.52 89.70 884.85 87.63L885.13 85.87Q885.46 83.80 887.56 83.80L889.36 83.80Q891.46 83.80 891.13 85.87L889.91 93.53Q889.58 95.60 887.48 95.60L883.58 95.60"/><path d="M898.26 83.80L900.06 83.80Q902.16 83.80 901.83 85.87L900.61 93.53Q900.28 95.60 898.18 95.60L896.38 95.60Q894.28 95.60 894.61 93.53L895.83 85.87Q896.16 83.80 898.26 83.80Z"/><path d="M895.22 89.70L901.22 89.70"/><path d="M908.96 83.80L910.76 83.80Q912.86 83.80 912.53 85.87L911.31 93.53Q910.98 95.60 908.88 95.60L907.08 95.60Q904.98 95.60 905.31 93.53L906.53 85.87Q906.86 83.80 908.96 83.80Z"/></g><g stroke="#1fe61f" stroke-width="2.55" fill="none" stroke-linecap="round" stroke-linejoin="round"><path d="M876.01 104.55L874.12 116.35"/><path d="M874.10 105.85L876.01 104.55"/><circle cx="879.75" cy="116.20" r="1.40" fill="#1fe61f" stroke="none"/><path d="M885.11 104.55L884.50 108.38Q884.17 110.45 886.27 110.45L890.17 110.45"/><path d="M891.11 104.55L889.23 116.35"/><path d="M897.91 104.55L899.71 104.55Q901.81 104.55 901.48 106.62L900.26 114.28Q899.93 116.35 897.83 116.35L896.03 116.35Q893.93 116.35 894.26 114.28L895.48 106.62Q895.81 104.55 897.91 104.55Z"/><path d="M912.51 104.55L908.61 104.55Q906.51 104.55 906.18 106.62L904.96 114.28Q904.63 116.35 906.73 116.35L908.53 116.35Q910.63 116.35 910.96 114.28L911.24 112.52Q911.57 110.45 909.47 110.45L905.57 110.45"/></g><g stroke="#1fe61f" stroke-width="2.55" fill="none" stroke-linecap="round" stroke-linejoin="round"><path d="M870.66 125.30L868.77 137.10"/><path d="M868.75 126.60L870.66 125.30"/><path d="M877.16 125.30L881.06 125.30Q883.16 125.30 882.83 127.37L881.61 135.03Q881.27 137.10 879.17 137.10L875.27 137.10"/><path d="M878.32 131.20L882.22 131.20"/><circle cx="885.10" cy="136.95" r="1.40" fill="#1fe61f" stroke="none"/><path d="M896.46 125.30L892.56 125.30Q890.46 125.30 890.13 127.37L888.91 135.03Q888.58 137.10 890.68 137.10L892.48 137.10Q894.58 137.10 894.91 135.03L895.19 133.27Q895.52 131.20 893.42 131.20L889.52 131.20"/><path d="M901.16 125.30L905.06 125.30Q907.16 125.30 906.83 127.37L905.61 135.03Q905.28 137.10 903.18 137.10L899.28 137.10"/><path d="M902.32 131.20L906.22 131.20"/><path d="M917.86 125.30L913.96 125.30Q911.86 125.30 911.53 127.37L910.31 135.03Q909.98 137.10 912.08 137.10L913.88 137.10Q915.98 137.10 916.31 135.03L916.59 133.27Q916.92 131.20 914.82 131.20L910.92 131.20"/></g><g stroke="#1fe61f" stroke-width="2.55" fill="none" stroke-linecap="round" stroke-linejoin="round"><path d="M872.16 146.05L871.55 149.88Q871.22 151.95 873.32 151.95L877.22 151.95"/><path d="M878.16 146.05L876.27 157.85"/><circle cx="880.10" cy="157.70" r="1.40" fill="#1fe61f" stroke="none"/><path d="M890.52 151.95L886.62 151.95Q884.52 151.95 884.85 149.88L885.13 148.12Q885.46 146.05 887.56 146.05L889.36 146.05Q891.46 146.05 891.13 148.12L889.91 155.78Q889.58 157.85 887.48 157.85L883.58 157.85"/><path d="M898.26 146.05L900.06 146.05Q902.16 146.05 901.83 148.12L900.61 155.78Q900.28 157.85 898.18 157.85L896.38 157.85Q894.28 157.85 894.61 155.78L895.83 148.12Q896.16 146.05 898.26 146.05Z"/><path d="M895.22 151.95L901.22 151.95"/><path d="M908.96 146.05L910.76 146.05Q912.86 146.05 912.53 148.12L911.31 155.78Q910.98 157.85 908.88 157.85L907.08 157.85Q904.98 157.85 905.31 155.78L906.53 148.12Q906.86 146.05 908.96 146.05Z"/></g><g stroke="#1fe61f" stroke-width="2.55" fill="none" stroke-linecap="round" stroke-linejoin="round"><path d="M874.26 166.80L876.06 166.80Q878.16 166.80 877.83 168.87L876.61 176.53Q876.27 178.60 874.17 178.60L872.38 178.60Q870.27 178.60 870.61 176.53L871.83 168.87Q872.16 166.80 874.26 166.80Z"/><circle cx="880.10" cy="178.45" r="1.40" fill="#1fe61f" stroke="none"/><path d="M891.46 166.80L887.56 166.80Q885.46 166.80 885.13 168.87L884.85 170.63Q884.52 172.70 886.62 172.70L888.42 172.70Q890.52 172.70 890.19 174.77L889.91 176.53Q889.58 178.60 887.48 178.60L883.58 178.60"/><path d="M898.26 166.80L900.06 166.80Q902.16 166.80 901.83 168.87L900.61 176.53Q900.28 178.60 898.18 178.60L896.38 178.60Q894.28 178.60 894.61 176.53L895.83 168.87Q896.16 166.80 898.26 166.80Z"/><path d="M895.22 172.70L901.22 172.70"/><path d="M912.86 166.80L908.96 166.80Q906.86 166.80 906.53 168.87L905.31 176.53Q904.98 178.60 907.08 178.60L908.88 178.60Q910.98 178.60 911.31 176.53L911.59 174.77Q911.92 172.70 909.82 172.70L905.92 172.70"/></g></svg>
</div></body></html>
